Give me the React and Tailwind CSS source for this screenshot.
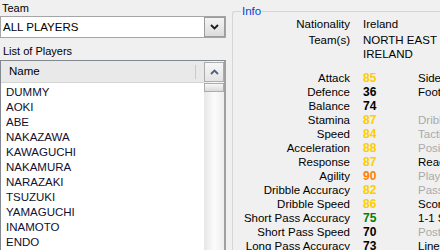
import React from "react";

const players = [
  "DUMMY",
  "AOKI",
  "ABE",
  "NAKAZAWA",
  "KAWAGUCHI",
  "NAKAMURA",
  "NARAZAKI",
  "TSUZUKI",
  "YAMAGUCHI",
  "INAMOTO",
  "ENDO",
];

const stats = [
  ["Attack", 85, "Side", true],
  ["Defence", 36, "Foot", true],
  ["Balance", 74, "", true],
  ["Stamina", 87, "Dribbling", false],
  ["Speed", 84, "Tactical Dribble", false],
  ["Acceleration", 88, "Positioning", false],
  ["Response", 87, "Reaction", true],
  ["Agility", 90, "Playmaking", false],
  ["Dribble Accuracy", 82, "Passing", false],
  ["Dribble Speed", 86, "Scoring", true],
  ["Short Pass Accuracy", 75, "1-1 Scoring", true],
  ["Short Pass Speed", 70, "Post Player", false],
  ["Long Pass Accuracy", 73, "Lines", true],
];

const valueColor = (v) => {
  if (v >= 90) return "text-[#ff8000]";
  if (v >= 80) return "text-[#ffcc00]";
  if (v >= 75) return "text-[#008000]";
  return "text-black";
};

function Chevron({ up, color }) {
  return (
    <svg width="9" height="6" viewBox="0 0 9 6">
      <path
        d={up ? "M1 5 L4.5 1.5 L8 5" : "M1 1 L4.5 4.5 L8 1"}
        fill="none"
        stroke={color}
        strokeWidth="1.8"
      />
    </svg>
  );
}

export default function App() {
  return (
    <div className="flex h-[250px] w-[440px] overflow-hidden bg-[#f0f0f0] font-['Liberation_Sans',Arial,sans-serif] text-[11px] text-black">
      {/* left column */}
      <div className="flex w-[226px] shrink-0 flex-col">
        <div className="h-[16px] pl-[2px] leading-[16px]">Team</div>
        <div className="flex h-[22px] items-center border border-[#a5a5a5] bg-white">
          <span className="pl-[2px] text-[11.5px] leading-[20px]">ALL PLAYERS</span>
          <div className="ml-auto flex h-[20px] w-[21px] items-center justify-center border border-[#9c9c9c] bg-gradient-to-b from-[#f4f4f4] to-[#dcdcdc]">
            <Chevron color="#1a1a1a" />
          </div>
        </div>
        <div className="mt-[5px] h-[17px] pl-[3px] leading-[17px]">List of Players</div>
        <div className="flex flex-1 border-l border-t border-r-2 border-[#a0a0a0] border-l-[#828790] border-t-[#828790]">
          <div className="flex flex-1 flex-col">
            <div className="flex h-[22px] items-center border-b border-[#d5d5d5] bg-[#e9e9e9]">
              <div className="w-[194px] pl-[8px] text-[11.5px]">Name</div>
              <div className="h-[14px] w-px bg-[#c9c9c9]" />
            </div>
            <div className="flex-1 bg-white pt-[2px]">
              {players.map((p, i) => (
                <div key={i} className="h-[15px] pl-[5px] text-[11.5px] leading-[15px] text-[#101030]">
                  {p}
                </div>
              ))}
            </div>
          </div>
          <div className="flex w-[20px] flex-col bg-gradient-to-r from-[#e6e6e6] via-[#fbfbfb] to-[#efefef] pt-[1px]">
            <div className="flex h-[20px] items-center justify-center border border-[#acacac] bg-gradient-to-b from-[#f6f6f6] to-[#e4e4e4]">
              <Chevron up color="#4d6185" />
            </div>
            <div className="mt-[1px] h-[9px] border border-[#acacac] bg-gradient-to-b from-[#f7f7f7] to-[#dadada]" />
          </div>
        </div>
      </div>

      {/* right info group */}
      <div className="flex-1 pl-[6px] pt-[11px]">
        <div className="relative h-[260px] rounded-tl-[3px] border-l border-t border-[#d5d5d5]">
          <div className="absolute -top-[8px] left-[8px] bg-[#f0f0f0] px-[1px] text-[11.5px] leading-[14px] text-[#0046d5]">
            Info
          </div>
          <div className="grid grid-cols-[117px_42px_1fr] gap-x-[13px] gap-y-[2px] pt-[5px] text-[11.5px] leading-[14px]">
            <div className="text-right">Nationality</div>
            <div className="col-span-2">Ireland</div>
            <div className="text-right">Team(s)</div>
            <div className="col-span-2 w-[84px]">NORTH EAST IRELAND</div>
          </div>
          <div className="mt-[10px] grid grid-cols-[117px_42px_1fr] gap-x-[13px] text-[11.5px]">
            {stats.map(([label, value, extra, on]) => (
              <React.Fragment key={label}>
                <div className="h-[14px] whitespace-nowrap text-right leading-[14px]">{label}</div>
                <div className={`h-[14px] text-[12px] font-bold leading-[14px] ${valueColor(value)}`}>
                  {value}
                </div>
                <div
                  className={`h-[14px] whitespace-nowrap leading-[14px] ${on ? "text-black" : "text-[#aaaaaa]"}`}
                >
                  {extra}
                </div>
              </React.Fragment>
            ))}
          </div>
        </div>
      </div>
    </div>
  );
}
